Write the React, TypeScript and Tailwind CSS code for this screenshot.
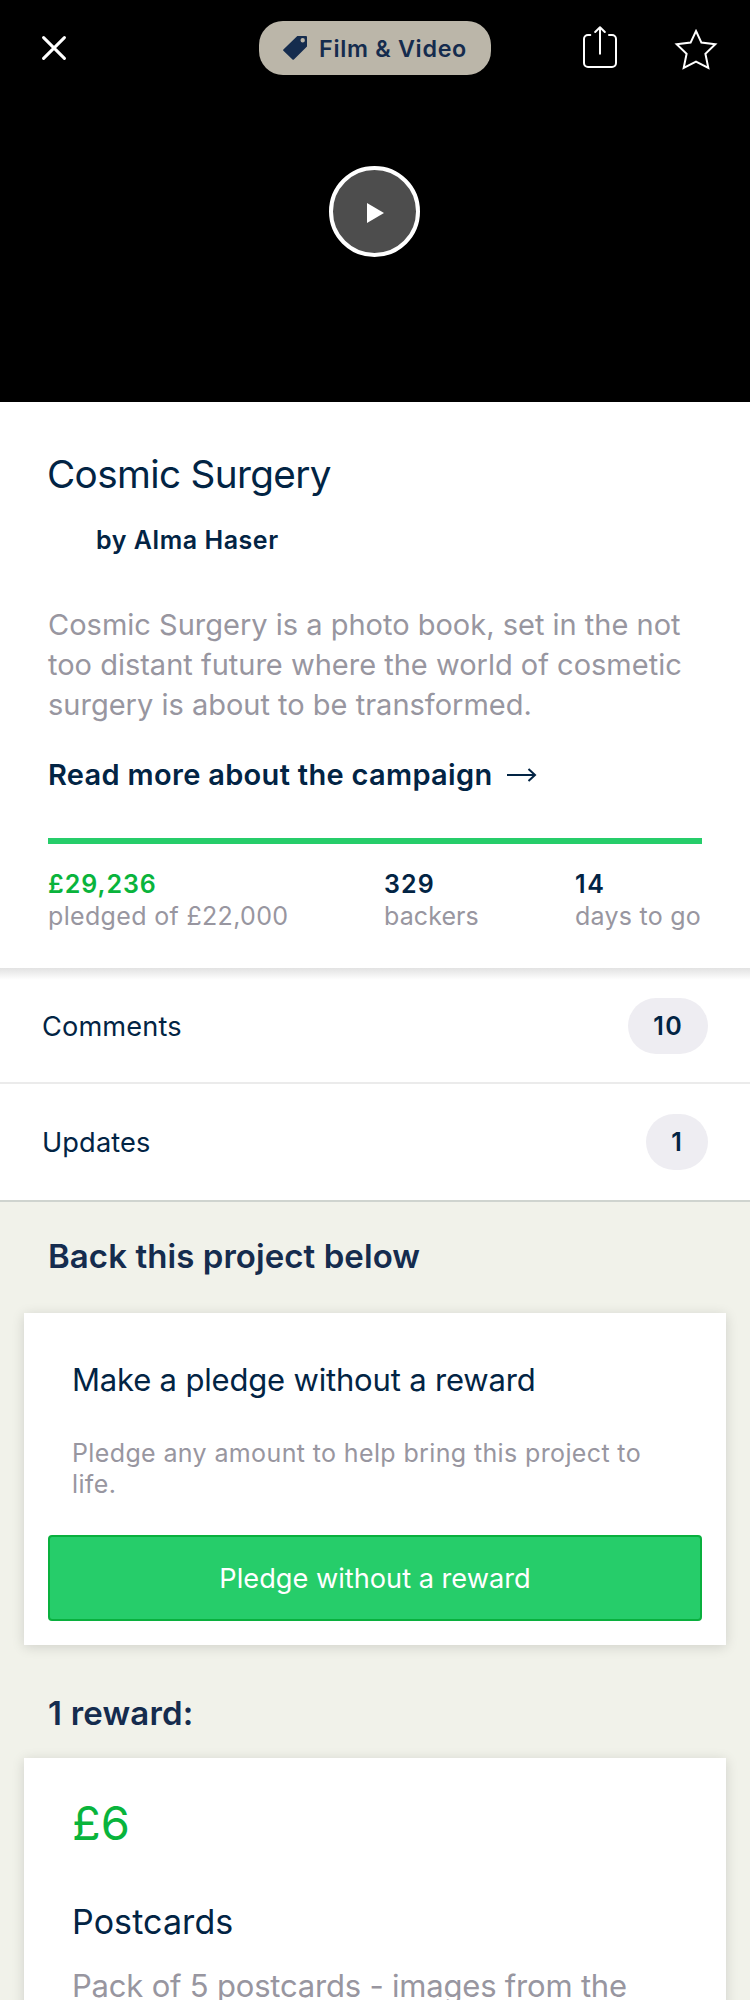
import type { ReactNode } from "react";

function CloseIcon() {
  return (
    <svg width="24" height="24" viewBox="0 0 24 24" fill="none" stroke="#fff" strokeWidth="3" strokeLinecap="round">
      <path d="M1.6 1.6 22.4 22.4M22.4 1.6 1.6 22.4" />
    </svg>
  );
}

function TagIcon() {
  return (
    <svg width="24" height="24" viewBox="0 0 24 24" fill="#152c4e" fillRule="evenodd">
      <path d="M14.3 0H23A1 1 0 0 1 24 1V10.4L10.9 23.5Q10.2 24.2 9.5 23.5L0.4 14.8Q-0.2 14.2 0.4 13.6ZM19.7 2.1a2.2 2.2 0 1 0 0 4.4a2.2 2.2 0 0 0 0-4.4Z" />
    </svg>
  );
}

function ShareIcon() {
  return (
    <svg width="34" height="42" viewBox="0 0 34 42" fill="none" stroke="#fff" strokeWidth="2" strokeLinecap="round" strokeLinejoin="round">
      <path d="M7.3 9H5a4 4 0 0 0-4 4V37a4 4 0 0 0 4 4H29a4 4 0 0 0 4-4V13a4 4 0 0 0-4-4H26" />
      <path d="M17 27.8V1.5M12.2 6l4.8-4.7L21.8 6" />
    </svg>
  );
}

function StarIcon() {
  return (
    <svg width="44" height="44" viewBox="0 0 44 44" fill="none" stroke="#fff" strokeWidth="2" strokeMiterlimit="10">
      <path d="M22 4 27.4 15.6 41.3 17.3 31.4 26.8 34.3 40.8 22 34.5 9.7 40.8 12.6 26.8 2.7 17.3 16.6 15.6Z" />
    </svg>
  );
}

function ArrowIcon() {
  return (
    <svg width="30" height="14" viewBox="0 0 30 14" fill="none" stroke="#022444" strokeWidth="2">
      <path d="M0 7H28M21.5 1 28 7 21.5 13" />
    </svg>
  );
}

function Row({ label, count, className }: { label: string; count: string; className: string }) {
  return (
    <div className={`flex items-center justify-between border-b-2 pt-[30px] pr-[42px] pl-[42px] ${className}`}>
      <span className="pt-[2px] text-[27.2px] leading-[34px] tracking-[0.12px]">{label}</span>
      <span className="rounded-full bg-[#eeedf2] px-[25px] text-[25px] leading-[56px] font-semibold tracking-[1.3px]">{count}</span>
    </div>
  );
}

function Card({ children, className }: { children: ReactNode; className: string }) {
  return <div className={`mx-6 bg-white px-6 shadow-[0_2px_12px_rgba(0,0,0,0.14)] ${className}`}>{children}</div>;
}

export default function App() {
  return (
    <div className="h-[2000px] w-[750px] overflow-hidden bg-[#f1f2ea] font-['Inter',sans-serif] text-[#022444]">
      <header className="h-[402px] bg-black pt-[21px]">
        <div className="flex h-[54px] items-center pl-[42px]">
          <CloseIcon />
          <div className="ml-[193px] flex h-[54px] w-[232px] items-center rounded-[24px] bg-[#bbb6a9] pl-6 text-[#152c4e]">
            <TagIcon />
            <span className="ml-3 pt-px text-[23.3px] leading-[54px] font-semibold tracking-[0.7px] whitespace-nowrap">Film &amp; Video</span>
          </div>
          <div className="ml-[92px] -mt-[2px]">
            <ShareIcon />
          </div>
          <div className="mt-[2px] ml-[57px]">
            <StarIcon />
          </div>
        </div>
        <div className="mt-[91px] flex justify-center pr-px">
          <div className="flex size-[91px] items-center justify-center rounded-full border-4 border-white bg-[#4d4d4d]">
            <svg width="17" height="20" viewBox="0 0 17 20" fill="#fff" className="mt-[3px] ml-[2px]">
              <path d="M0 0 17 10 0 20Z" />
            </svg>
          </div>
        </div>
      </header>

      <section className="bg-white px-12 pt-12 pb-9">
        <h1 className="-ml-px text-[38.7px] leading-[48px] tracking-[-0.65px]">Cosmic Surgery</h1>
        <p className="mt-[26px] pl-12 text-[25px] leading-8 font-semibold tracking-[0.55px]">by Alma Haser</p>
        <p className="mt-[49px] text-[29px] leading-10 whitespace-nowrap text-[#9896a0]">
          Cosmic Surgery is a photo book, set in the not
          <br />
          too distant future where the world of cosmetic
          <br />
          surgery is about to be transformed.
        </p>
        <div className="mt-[30px] flex items-center gap-[15px] text-[29px] leading-10 font-semibold tracking-[0.31px]">
          Read more about the campaign
          <ArrowIcon />
        </div>
        <div className="mt-[43px] h-[6px] bg-[#26cd6a]" />
        <div className="mt-6 grid grid-cols-[336px_191px_1fr] text-[25px] leading-8 whitespace-nowrap">
          <div>
            <div className="font-semibold tracking-[0.95px] text-[#09b43c]">£29,236</div>
            <div className="tracking-[0.33px] text-[#9896a0]">pledged of £22,000</div>
          </div>
          <div>
            <div className="font-semibold tracking-[1.1px]">329</div>
            <div className="tracking-[0.1px] text-[#9896a0]">backers</div>
          </div>
          <div>
            <div className="font-semibold tracking-[1.8px]">14</div>
            <div className="tracking-[0.25px] text-[#9896a0]">days to go</div>
          </div>
        </div>
      </section>

      <section className="relative bg-white">
        <div className="absolute inset-x-0 top-0 h-3 bg-linear-to-b from-[#e2e2e2] to-white" />
        <Row label="Comments" count="10" className="border-[#ebebeb] pb-7" />
        <Row label="Updates" count="1" className="border-[#cfd4cf] pb-[30px]" />
      </section>

      <h2 className="mt-[30px] px-12 text-[33px] leading-[48px] font-semibold tracking-[0.07px] text-[#152c4e]">Back this project below</h2>
      <Card className="mt-[33px] pt-12 pb-6">
        <h3 className="px-6 text-[31px] leading-[37px] tracking-[-0.18px]">Make a pledge without a reward</h3>
        <p className="mt-10 px-6 text-[25px] leading-[31px] tracking-[0.37px] whitespace-nowrap text-[#9896a0]">
          Pledge any amount to help bring this project to
          <br />
          life.
        </p>
        <button className="mt-[35px] block h-[86px] w-full rounded-[4px] border-2 border-[#09b03e] bg-[#26cd6a] pt-px text-center text-[27.2px] leading-[82px] text-white">
          Pledge without a reward
        </button>
      </Card>

      <h2 className="mt-11 px-12 text-[33px] leading-[48px] font-semibold tracking-[0.2px] text-[#152c4e]">1 reward:</h2>
      <Card className="mt-[21px] h-[400px] pt-[37px]">
        <div className="px-6 text-[47px] leading-[56px] text-[#09b43c]">£6</div>
        <h3 className="mt-[50px] px-6 text-[34px] leading-[41px] tracking-[0.1px]">Postcards</h3>
        <p className="mt-[25px] px-6 text-[31px] leading-[37px] tracking-[-0.2px] whitespace-nowrap text-[#9896a0]">Pack of 5 postcards - images from the</p>
      </Card>
    </div>
  );
}
